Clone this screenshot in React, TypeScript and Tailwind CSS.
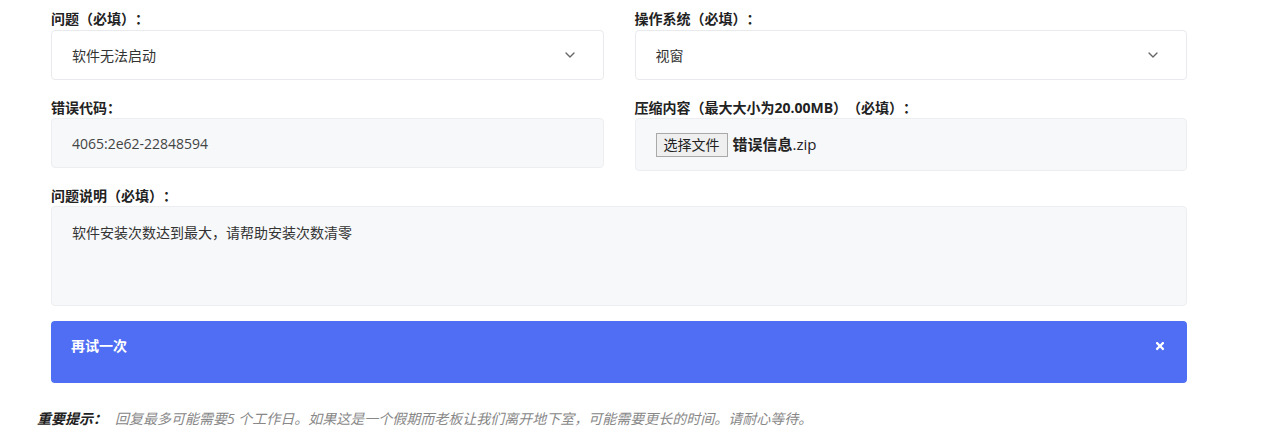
import { ChevronDown } from 'lucide-react'
import { FaTimes } from 'react-icons/fa'

const FONT = '"Open Sans", "Noto Sans CJK SC", sans-serif'

function Label({ children }: { children: React.ReactNode }) {
  return <div className="h-5 text-[14px] font-bold leading-5 text-[#222]">{children}</div>
}

function SelectBox({ value }: { value: string }) {
  return (
    <div className="mt-px flex h-[50px] items-center justify-between rounded border border-[#e8eaed] bg-white pl-5 pr-[25px] text-[14px] text-[#333]">
      <span className="pt-px">{value}</span>
      <ChevronDown size={16} strokeWidth={2} className="text-[#666]" />
    </div>
  )
}

export default function App() {
  return (
    <div
      className="h-[438px] w-[1265px] bg-white [text-spacing-trim:space-all]"
      style={{ fontFamily: FONT }}
    >
      <div className="w-[1187px] pl-[51px] pt-[9px]">
        {/* ── Row 1 ─────────────────────────────── */}
        <div className="grid grid-cols-2 gap-[31px]">
          <div>
            <Label>问题（必填）：</Label>
            <SelectBox value="软件无法启动" />
          </div>
          <div>
            <Label>操作系统（必填）：</Label>
            <SelectBox value="视窗" />
          </div>
        </div>

        {/* ── Row 2 ─────────────────────────────── */}
        <div className="mt-[18px] grid grid-cols-2 items-start gap-[31px]">
          <div>
            <Label>错误代码：</Label>
            <div className="flex h-[50px] items-center rounded border border-[#eceef1] bg-[#f7f8fa] pl-5 text-[14px] text-[#444]">
              4065:2e62-22848594
            </div>
          </div>
          <div>
            <Label>压缩内容（最大大小为20.00MB）（必填）：</Label>
            <div className="flex h-[53px] items-center rounded border border-[#eceef1] bg-[#f7f8fa] pl-5">
              <span className="flex h-6 w-[72px] items-center justify-center border border-[#a9a9a9] bg-[#efefef] text-[14px] text-[#222]">
                选择文件
              </span>
              <span className="ml-[5px] text-[15px] text-[#222]">
                <span className="font-bold">错误信息</span>.zip
              </span>
            </div>
          </div>
        </div>

        {/* ── Description ───────────────────────── */}
        <div className="mt-[15px]">
          <Label>问题说明（必填）：</Label>
          <div className="h-[100px] rounded border border-[#eceef1] bg-[#f7f8fa] pl-5 pt-[16px] text-[14px] leading-5 text-[#333]">
            软件安装次数达到最大，请帮助安装次数清零
          </div>
        </div>

        {/* ── Alert ─────────────────────────────── */}
        <div className="mt-[15px] flex h-[62px] items-start justify-between rounded bg-[#4f6ef3] px-5 pt-[15px] text-white">
          <span className="text-[14px] font-bold leading-5">再试一次</span>
          <FaTimes size={12} className="mr-px mt-[4px]" />
        </div>
      </div>

      {/* ── Footer note ───────────────────────────── */}
      <div className="mt-[26px] pl-[37px] text-[14px] italic leading-5">
        <span className="font-bold text-[#222]">重要提示：</span>
        <span className="ml-2 text-[#888]">
          回复最多可能需要5 个工作日。如果这是一个假期而老板让我们离开地下室，可能需要更长的时间。请耐心等待。
        </span>
      </div>
    </div>
  )
}
